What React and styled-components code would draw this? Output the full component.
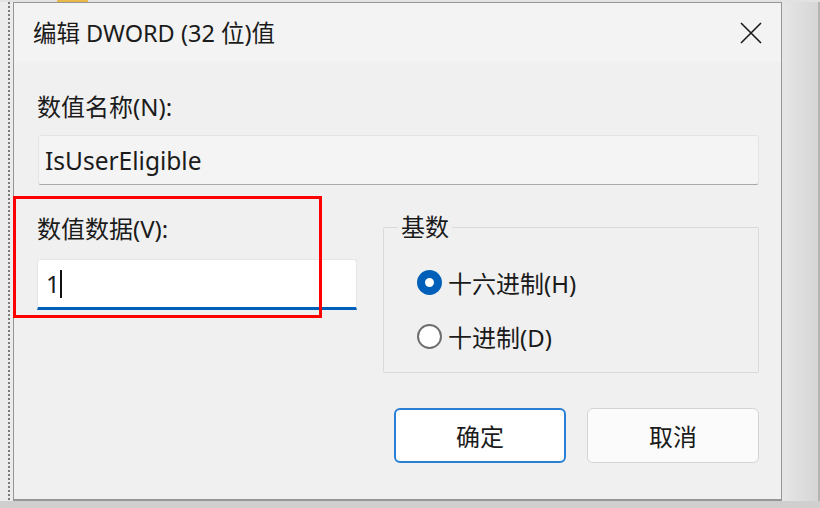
import React from 'react';
import styled, { createGlobalStyle } from 'styled-components';

const GlobalStyle = createGlobalStyle`
  html, body {
    margin: 0;
    padding: 0;
    background: #d6d6d6;
  }
  body {
    font-family: "Noto Sans", "Noto Sans CJK SC", sans-serif;
    color: #1b1b1b;
  }
`;

const ScreenS = styled.div`
  position: relative;
  width: 820px;
  height: 508px;
  overflow: hidden;
  display: flex;
  flex-direction: column;
  background: #d4d4d4;
`;

const TopEdgeS = styled.div`
  height: 2px;
  background: #e2e2e2;
  display: flex;
`;

const FolderBitS = styled.span`
  width: 31px;
  height: 2px;
  margin-left: 57px;
  background: #e8b84a;
`;

const MiddleS = styled.div`
  display: flex;
  height: 499px;
`;

const LeftEdgeS = styled.div`
  width: 13px;
  background: #ececec;
  display: flex;
`;

const DotsS = styled.div`
  width: 2px;
  margin-left: 8px;
  background: repeating-linear-gradient(to bottom, #7a7a7a 0 2px, transparent 2px 4px);
`;

const RightEdgeS = styled.div`
  width: 36px;
  background: linear-gradient(to right, #e6e6e6, #d6d6d6);
  border-right: 2px solid #b4b4b4;
`;

const BottomEdgeS = styled.div`
  flex: 1;
  background: #cfcfcf;
`;

const DialogS = styled.div`
  box-sizing: border-box;
  width: 769px;
  border: 1px solid #969696;
  border-bottom-width: 2px;
  background: #f0f0f0;
  display: flex;
  flex-direction: column;
`;

const TitleBarS = styled.div`
  height: 59px;
  background: #f3f3f3;
  display: flex;
  align-items: center;
  justify-content: space-between;
  padding: 0 19px 0 19px;
`;

const TitleS = styled.div`
  font-size: 23.5px;
  line-height: 30px;
`;

const CloseS = styled.svg`
  width: 22px;
  height: 22px;
`;

const BodyS = styled.div`
  padding: 30px 22px 0 23px;
`;

const LabelS = styled.div`
  font-size: 24px;
  line-height: 30px;
`;

const NameFieldS = styled.div`
  box-sizing: border-box;
  height: 50px;
  margin-top: 13px;
  margin-left: 1px;
  padding-left: 6px;
  display: flex;
  align-items: center;
  font-size: 24.5px;
  background: #f4f4f4;
  border: 1px solid #e4e4e4;
  border-bottom-color: #a9a9a9;
  border-radius: 3px;
`;

const RowS = styled.div`
  display: grid;
  grid-template-columns: 320px 1fr;
  column-gap: 26px;
  margin-top: 29px;
`;

const ValueInputS = styled.div`
  box-sizing: border-box;
  height: 51px;
  margin-top: 15px;
  padding-left: 8px;
  display: flex;
  align-items: center;
  font-size: 24px;
  background: #ffffff;
  border: 1px solid #e6e6e6;
  border-bottom: 3px solid #005fb8;
  border-radius: 3px 3px 0 0;
`;

const CaretS = styled.span`
  width: 2px;
  height: 28px;
  margin-left: 0;
  background: #111;
`;

const GroupS = styled.fieldset`
  margin: 0;
  padding: 27px 0 21px 14px;
  border: 1px solid #dadada;
  border-radius: 2px;
  display: flex;
  flex-direction: column;
  gap: 24px;
`;

const LegendS = styled.legend`
  padding: 0 3px;
  font-size: 24px;
  line-height: 26px;
`;

const RadioRowS = styled.div`
  display: flex;
  align-items: center;
  height: 30px;
  margin-left: 19px;
  font-size: 24px;
  gap: 6px;
`;

const RadioS = styled.span`
  box-sizing: border-box;
  width: 25px;
  height: 25px;
  border-radius: 50%;
  border: ${(p) => (p.checked ? '8px solid #005fb8' : '2px solid #6e6e6e')};
  background: #ffffff;
`;

const ButtonRowS = styled.div`
  display: flex;
  justify-content: flex-end;
  gap: 21px;
  margin-top: 35px;
`;

const ButtonS = styled.div`
  box-sizing: border-box;
  width: 172px;
  height: 55px;
  display: flex;
  align-items: center;
  justify-content: center;
  font-size: 24px;
  border-radius: 6px;
  background: ${(p) => (p.primary ? '#ffffff' : '#fbfbfb')};
  border: ${(p) => (p.primary ? '2px solid #2a7fd4' : '1.5px solid #d4d4d4')};
`;

const MarkS = styled.div`
  position: absolute;
  left: 13px;
  top: 196px;
  width: 309px;
  height: 122px;
  box-sizing: border-box;
  border: 3.5px solid #ff0000;
`;

const App = () => {
  return (
    <>
      <GlobalStyle />
      <ScreenS>
        <TopEdgeS>
          <FolderBitS />
        </TopEdgeS>
        <MiddleS>
          <LeftEdgeS>
            <DotsS />
          </LeftEdgeS>
          <DialogS>
            <TitleBarS>
              <TitleS>编辑 DWORD (32 位)值</TitleS>
              <CloseS viewBox="0 0 22 22">
                <path d="M1 1 L21 21 M21 1 L1 21" stroke="#1a1a1a" strokeWidth="1.6" fill="none" />
              </CloseS>
            </TitleBarS>
            <BodyS>
              <LabelS>数值名称(N):</LabelS>
              <NameFieldS>IsUserEligible</NameFieldS>
              <RowS>
                <div>
                  <LabelS>数值数据(V):</LabelS>
                  <ValueInputS>
                    1<CaretS />
                  </ValueInputS>
                </div>
                <GroupS>
                  <LegendS>基数</LegendS>
                  <RadioRowS>
                    <RadioS checked />
                    十六进制(H)
                  </RadioRowS>
                  <RadioRowS>
                    <RadioS />
                    十进制(D)
                  </RadioRowS>
                </GroupS>
              </RowS>
              <ButtonRowS>
                <ButtonS primary>确定</ButtonS>
                <ButtonS>取消</ButtonS>
              </ButtonRowS>
            </BodyS>
          </DialogS>
          <RightEdgeS />
        </MiddleS>
        <BottomEdgeS />
        <MarkS />
      </ScreenS>
    </>
  );
};

export default App;
